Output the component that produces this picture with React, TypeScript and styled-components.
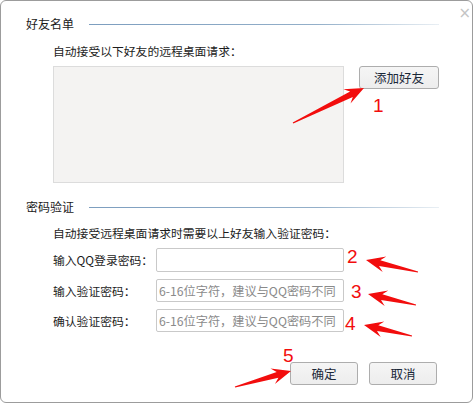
import styled, { createGlobalStyle } from 'styled-components'

const GlobalStyle = createGlobalStyle`
  html, body {
    margin: 0;
    padding: 0;
    background: #ffffff;
  }
  body {
    font-family: "Noto Sans CJK SC", "Noto Sans", sans-serif;
  }
`

// 箭头标注: 尾部细, 头部是带倒钩的三角
const arrowPoints = (x1: number, y1: number, x2: number, y2: number) => {
  const dx = x2 - x1
  const dy = y2 - y1
  const len = Math.sqrt(dx * dx + dy * dy)
  const ux = dx / len
  const uy = dy / len
  const nx = -uy
  const ny = ux
  const head = 19
  const barb = 8
  const shaft = 3
  const at = (d: number, o: number) =>
    `${(x1 + ux * d + nx * o).toFixed(1)},${(y1 + uy * d + ny * o).toFixed(1)}`
  return [
    at(0, 0.6),
    at(len - head + 5, shaft),
    at(len - head, barb),
    at(len, 0),
    at(len - head, -barb),
    at(len - head + 5, -shaft),
    at(0, -0.6),
  ].join(' ')
}

const arrows = [
  { x1: 293, y1: 123, x2: 364, y2: 88 },
  { x1: 418, y1: 272, x2: 366, y2: 260 },
  { x1: 416, y1: 305, x2: 368, y2: 294 },
  { x1: 412, y1: 336, x2: 364, y2: 325 },
  { x1: 235, y1: 387, x2: 291, y2: 371 },
]

const marks = [
  { n: '1', x: 373, y: 112 },
  { n: '2', x: 347, y: 263 },
  { n: '3', x: 351, y: 298 },
  { n: '4', x: 345, y: 330 },
  { n: '5', x: 283, y: 362 },
]

const App = () => {
  return (
    <>
      <GlobalStyle />
      <Window>
        <Close>×</Close>

        <SectionHead>
          <SectionTitle>好友名单</SectionTitle>
          <Rule />
        </SectionHead>
        <Body>
          <Desc>自动接受以下好友的远程桌面请求：</Desc>
          <ListRow>
            <FriendList />
            <Button $width={80}>添加好友</Button>
          </ListRow>
        </Body>

        <SectionHead $top={15}>
          <SectionTitle>密码验证</SectionTitle>
          <Rule />
        </SectionHead>
        <Body>
          <Desc $top={8}>自动接受远程桌面请求时需要以上好友输入验证密码：</Desc>
          <Form>
            <FieldRow>
              <Label>输入QQ登录密码：</Label>
              <Input type="password" $tall />
            </FieldRow>
            <FieldRow>
              <Label>输入验证密码：</Label>
              <Input type="password" placeholder="6-16位字符，建议与QQ密码不同" />
            </FieldRow>
            <FieldRow>
              <Label>确认验证密码：</Label>
              <Input type="password" placeholder="6-16位字符，建议与QQ密码不同" />
            </FieldRow>
          </Form>
        </Body>

        <Footer>
          <Button $width={68}>确定</Button>
          <Button $width={68}>取消</Button>
        </Footer>

        <Marks viewBox="0 0 474 404">
          {arrows.map((a, i) => (
            <polygon key={i} points={arrowPoints(a.x1, a.y1, a.x2, a.y2)} fill="#f20d0d" />
          ))}
          {marks.map((m) => (
            <MarkText key={m.n} x={m.x} y={m.y}>
              {m.n}
            </MarkText>
          ))}
        </Marks>
      </Window>
    </>
  )
}

const Window = styled.div`
  position: relative;
  width: 473px;
  height: 403px;
  box-sizing: border-box;
  border: 1px solid #9c9c9c;
  border-radius: 6px;
  background: #ffffff;
  padding: 14px 33px 0 25px;
  display: flex;
  flex-direction: column;
  color: #1c1c1c;
  font-size: 11.8px;
  overflow: hidden;
`

const Close = styled.span`
  position: absolute;
  top: 2px;
  right: 1px;
  font-family: "DejaVu Sans", sans-serif;
  font-size: 15px;
  line-height: 20px;
  color: #c4c4c4;
`

const SectionHead = styled.div<{ $top?: number }>`
  display: flex;
  align-items: center;
  height: 18px;
  margin-top: ${(p) => p.$top ?? 0}px;
`

const SectionTitle = styled.span`
  font-size: 12px;
  line-height: 18px;
  color: #1a1a1a;
`

const Rule = styled.div`
  flex: 1;
  height: 1px;
  margin-left: 15px;
  background: linear-gradient(to right, #7d9ebf, #93afc9 65%, #e9eff4);
`

const Body = styled.div`
  display: flex;
  flex-direction: column;
  padding-left: 27px;
`

const Desc = styled.div<{ $top?: number }>`
  margin-top: ${(p) => p.$top ?? 9}px;
  line-height: 18px;
  color: #1c1c1c;
`

const ListRow = styled.div`
  display: flex;
  align-items: flex-start;
  gap: 15px;
  margin-top: 6px;
`

const FriendList = styled.div`
  width: 291px;
  height: 117px;
  box-sizing: border-box;
  background: #f4f3f2;
  border: 1px solid #dcdcdc;
`

const Button = styled.button<{ $width: number }>`
  width: ${(p) => p.$width}px;
  height: 23px;
  box-sizing: border-box;
  padding: 0;
  background: linear-gradient(#f5f5f5, #ededed);
  border: 1px solid #adadad;
  border-radius: 3px;
  color: #1b2838;
  font-family: "Noto Sans CJK SC", sans-serif;
  font-size: 12.5px;
  line-height: 20px;
`

const Form = styled.div`
  display: flex;
  flex-direction: column;
  gap: 7px;
  margin-top: 6px;
`

const FieldRow = styled.div`
  display: flex;
  align-items: center;
`

const Label = styled.span`
  width: 103px;
  flex-shrink: 0;
  color: #1c1c1c;
  line-height: 18px;
`

const Input = styled.input<{ $tall?: boolean }>`
  width: 188px;
  height: ${(p) => (p.$tall ? 24 : 23)}px;
  box-sizing: border-box;
  margin: 0;
  padding: 0 0 0 2px;
  border: 1px solid #c9c9c9;
  border-radius: 2px;
  background: #ffffff;
  font-family: "Noto Sans CJK SC", sans-serif;
  font-size: 12.2px;
  outline: none;

  &::placeholder {
    color: #8a8a8a;
  }
`

const Footer = styled.div`
  display: flex;
  justify-content: flex-end;
  gap: 11px;
  margin-top: 30px;
  padding-right: 2px;
`

const Marks = styled.svg`
  position: absolute;
  left: -1px;
  top: -1px;
  width: 474px;
  height: 404px;
  pointer-events: none;
`

const MarkText = styled.text`
  font-family: "Liberation Sans", sans-serif;
  font-size: 19px;
  fill: #f20d0d;
`

export default App
